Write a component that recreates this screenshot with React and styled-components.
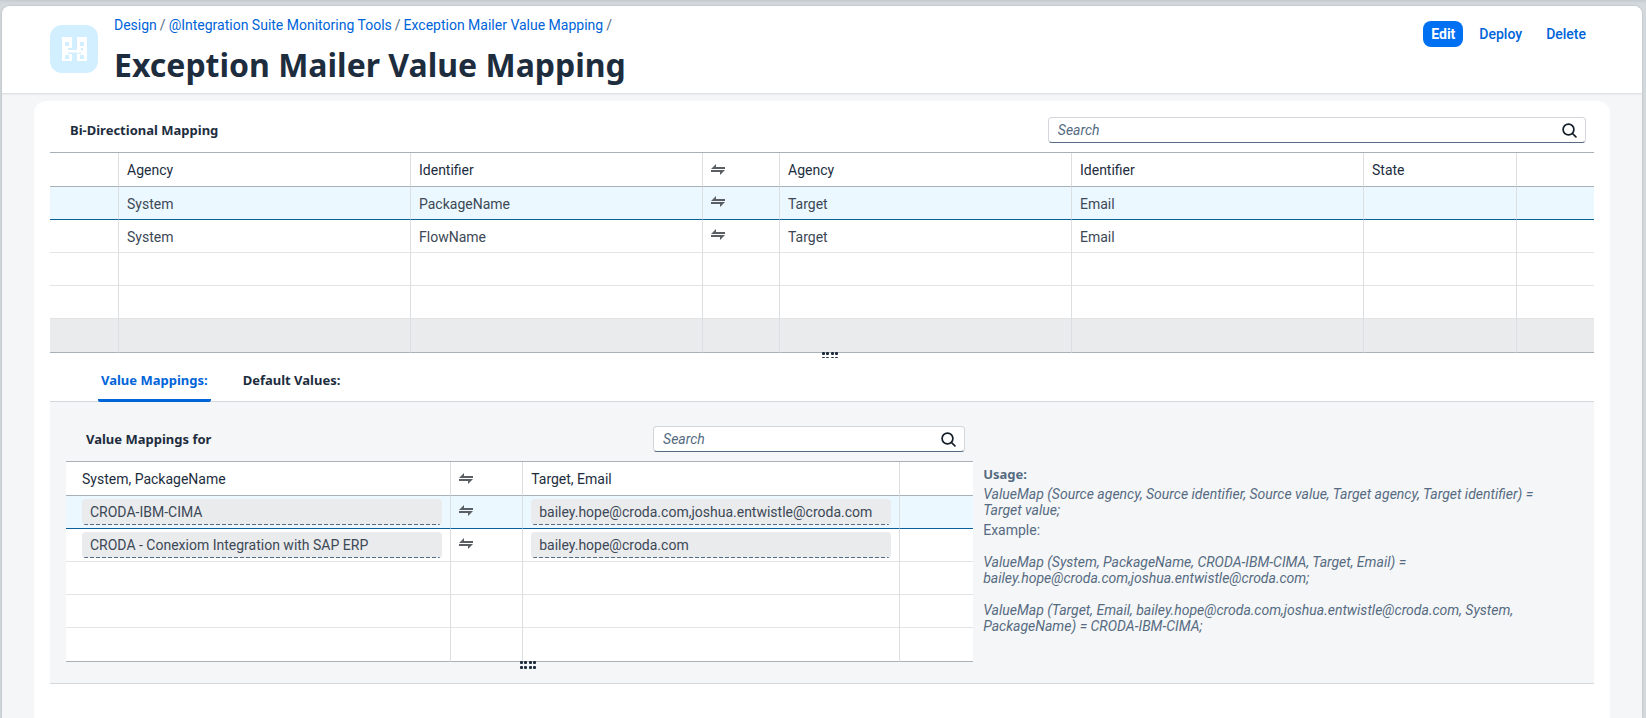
import React from "react";
import styled, { createGlobalStyle, css } from "styled-components";

const textFont = `Roboto, "Liberation Sans", sans-serif`;
const headingFont = `"Noto Sans", "Open Sans", sans-serif`;

const GlobalStyle = createGlobalStyle`
  * { box-sizing: border-box; }
  body {
    margin: 0;
    background: #d5dadd;
    color: #1d2d3e;
    font: 14px/20px ${textFont};
  }
  button, input { font: inherit; color: inherit; }
`;

const strongText = css`
  font-family: ${headingFont};
  font-size: 13px;
  font-weight: 700;
  line-height: 20px;
`;

const Shell = styled.div`
  display: flex;
  min-height: 100vh;
  padding: 6px 4px 0 2px;
  box-shadow: inset 0 3px 3px -1px #c6ccd1;
`;

const Page = styled.div`
  flex: 1;
  display: flex;
  flex-direction: column;
  min-width: 0;
  background: #f5f6f7;
  border-radius: 8px 8px 0 0;
  overflow: hidden;
  box-shadow: 0 0 2px #9aa5af;
`;

const Header = styled.header`
  display: flex;
  align-items: flex-start;
  height: 87px;
  padding: 8px 48px 0;
  background: #fff;
  box-shadow: 0 1px 2px #d5d8dc;
`;

const ObjectIcon = styled.div`
  display: flex;
  align-items: center;
  justify-content: center;
  width: 48px;
  height: 48px;
  margin: 11px 16px 0 0;
  border-radius: 12px;
  background: #d1efff;
`;

const Heading = styled.div`
  flex: 1;
  min-width: 0;
`;

const Breadcrumbs = styled.nav`
  display: flex;
  gap: 3px;
  margin-top: 1px;
  color: #556b82;
`;

const Crumb = styled.a`
  color: #0064d9;
  text-decoration: none;
`;

const Title = styled.h1`
  margin: 8px 0 0;
  font: 700 32px/44px ${headingFont};
`;

const Actions = styled.div`
  display: flex;
  gap: 8px;
  margin-top: 7px;
`;

const Action = styled.button`
  height: 26px;
  padding: 0 8px;
  border: 0;
  border-radius: 8px;
  font-weight: ${(p) => (p.$primary ? 700 : 500)};
  background: ${(p) => (p.$primary ? "#0070f2" : "transparent")};
  color: ${(p) => (p.$primary ? "#fff" : "#0064d9")};
`;

const Panel = styled.main`
  flex: 1;
  margin: 8px 32px 0;
  padding: 0 16px;
  background: #fff;
  border-radius: 12px 12px 0 0;
`;

const Toolbar = styled.div`
  display: flex;
  align-items: center;
  justify-content: space-between;
  padding: ${(p) => (p.$roomy ? 24 : 16)}px 8px 9px 20px;
`;

const ToolbarTitle = styled.h2`
  ${strongText}
  margin: 0;
`;

const SearchBox = styled.label`
  display: flex;
  align-items: center;
  width: 35.5%;
  height: 26px;
  padding: 0 8px;
  border: 1px solid #d3d7db;
  border-bottom-color: #556b82;
  border-radius: 4px;
  background: #fff;
`;

const SearchInput = styled.input`
  flex: 1;
  min-width: 0;
  padding: 0 1px;
  border: 0;
  outline: 0;
  background: transparent;
  &::placeholder {
    color: #556b82;
    font-style: italic;
    opacity: 1;
  }
`;

const Table = styled.table`
  width: 100%;
  table-layout: fixed;
  border-collapse: separate;
  border-spacing: 0;
  border-top: 1px solid #a8b0b8;
  background: #fff;
`;

const Col = styled.col`
  width: ${(p) => p.$width};
`;

const cellBase = css`
  padding: 0 8px;
  text-align: left;
  border-right: 1px solid #dcdfe2;
  &:first-child { padding-left: ${(p) => (p.$inset ? 16 : 8)}px; }
  &:last-child { border-right: 0; }
`;

const HeadCell = styled.th`
  ${cellBase}
  height: 34px;
  font-weight: 400;
  border-bottom: 1px solid #a8b0b8;
`;

const Cell = styled.td`
  ${cellBase}
  height: 33px;
  padding-bottom: ${(p) => (p.$raised ? 4 : 0)}px;
  border-bottom: 1px solid #e1e3e5;
  color: #3c4856;
`;

const Row = styled.tr`
  background: ${(p) => (p.$selected ? "#ebf8ff" : p.$muted ? "#eaebed" : "#fff")};
  ${Cell} { ${(p) => p.$selected && "border-bottom-color: #0a6199;"} }
  &:last-child ${Cell} {
    height: 34px;
    border-bottom-color: #a8b0b8;
  }
`;

const CellText = styled.span`
  display: block;
  padding-top: 2px;
`;

const Glyph = styled.svg`
  display: block;
  flex: none;
`;

const ValueField = styled.input`
  display: block;
  width: 100%;
  height: 26px;
  padding: 0 8px;
  border: 0;
  border-radius: 4px;
  background:
    repeating-linear-gradient(90deg, #556b82 0 4px, transparent 4px 6px)
    center bottom / calc(100% - 4px) 1px no-repeat #eaebed;
`;

const Splitter = styled.div`
  position: relative;
  height: 0;
`;

const Grip = styled.svg`
  position: absolute;
  top: -1px;
  left: 50%;
`;

const Tabs = styled.div`
  display: flex;
  gap: 29px;
  height: 49px;
  padding: 0 48px;
  border-bottom: 1px solid #d5d8dc;
  box-shadow: 0 2px 2px -1px #e4e7ea;
`;

const Tab = styled.button`
  ${strongText}
  height: 49px;
  padding: 8px 3px 0;
  border: 0;
  border-bottom: 3px solid ${(p) => (p.$active ? "#0064d9" : "transparent")};
  border-radius: 2px;
  background: transparent;
  color: ${(p) => (p.$active ? "#0064d9" : "#1d2d3e")};
`;

const Details = styled.section`
  display: grid;
  grid-template-columns: minmax(0, 6fr) minmax(0, 4fr);
  padding: 0 16px 21px;
  background: #f5f6f7;
  border-bottom: 1px solid #d5d8dc;
`;

const Usage = styled.aside`
  display: flex;
  flex-direction: column;
  gap: 4px;
  padding: 64px 16px 0 10px;
  color: #556b82;
  line-height: 16px;
`;

const UsageTitle = styled.h3`
  ${strongText}
  margin: 0;
  line-height: 16px;
`;

const UsageText = styled.p`
  margin: 0 0 ${(p) => (p.$spaced ? 12 : 0)}px;
  font-style: ${(p) => (p.$plain ? "normal" : "italic")};
`;

function MappingGlyph() {
  return (
    <Glyph width="25" height="24" viewBox="0 0 25 24" aria-hidden="true">
      <path
        fill="#fff"
        fillRule="evenodd"
        d="M0 0h10v11H6v2h9v-2h4v2.500h2V11h-6V0h10v24H15v-7h4v-1.500h-2V17l-3-1.500H6V17h4v7H0z M3 5v4h4V5z M18 5v4h4V5z M3 18v4h4v-4z M18 18v4h4v-4z"
      />
    </Glyph>
  );
}

function ArrowsGlyph() {
  return (
    <Glyph width="14" height="11" viewBox="0 0 14 11" role="img" aria-label="Bi-directional">
      <path fill="#5b5f63" d="M0 5 5 0v3h9v2zM0 6h14l-5 5V8H0z" />
    </Glyph>
  );
}

function GripHandle({ clipped }) {
  return (
    <Grip width="17" height={clipped ? 6 : 9} viewBox={`0 0 17 ${clipped ? 6 : 9}`} aria-hidden="true">
      {[0, 4, 9, 13].map((x) => (
        <g key={x} fill="#1d2d3e">
          <rect x={x} y="0" width="3" height="3" rx="1" />
          <rect x={x} y="5" width="3" height="3" rx="1" />
        </g>
      ))}
    </Grip>
  );
}

function Search({ name }) {
  return (
    <SearchBox>
      <SearchInput type="text" placeholder="Search" aria-label={name} />
      <Glyph width="15" height="15" viewBox="0 0 15 15" fill="none" stroke="#131e29" strokeWidth="1.7" strokeLinecap="round" aria-hidden="true">
        <circle cx="6.5" cy="6.5" r="5.4" />
        <path d="m10.5 10.5 3.4 3.4" />
      </Glyph>
    </SearchBox>
  );
}

const range = (n) => Array.from({ length: n }, (_, i) => i);

const mappings = [
  ["System", "PackageName", "Target", "Email"],
  ["System", "FlowName", "Target", "Email"],
  null,
  null,
  null,
];

const values = [
  ["CRODA-IBM-CIMA", "bailey.hope@croda.com,joshua.entwistle@croda.com"],
  ["CRODA - Conexiom Integration with SAP ERP", "bailey.hope@croda.com"],
  null,
  null,
  null,
];

function MappingTable() {
  return (
    <Table>
      <colgroup>
        {["69px", "auto", "auto", "77px", "auto", "auto", "153px", "77px"].map((w, i) => (
          <Col key={i} $width={w} />
        ))}
      </colgroup>
      <thead>
        <tr>
          <HeadCell />
          <HeadCell>Agency</HeadCell>
          <HeadCell>Identifier</HeadCell>
          <HeadCell><ArrowsGlyph /></HeadCell>
          <HeadCell>Agency</HeadCell>
          <HeadCell>Identifier</HeadCell>
          <HeadCell>State</HeadCell>
          <HeadCell />
        </tr>
      </thead>
      <tbody>
        {mappings.map((m, i) => (
          <Row key={i} $selected={i === 0} $muted={i === mappings.length - 1}>
            {m ? (
              <>
                <Cell />
                <Cell><CellText>{m[0]}</CellText></Cell>
                <Cell><CellText>{m[1]}</CellText></Cell>
                <Cell $raised><ArrowsGlyph /></Cell>
                <Cell><CellText>{m[2]}</CellText></Cell>
                <Cell><CellText>{m[3]}</CellText></Cell>
                <Cell />
                <Cell />
              </>
            ) : (
              range(8).map((c) => <Cell key={c} />)
            )}
          </Row>
        ))}
      </tbody>
    </Table>
  );
}

function ValueTable() {
  return (
    <Table>
      <colgroup>
        <Col $width="auto" />
        <Col $width="72px" />
        <Col $width="377px" />
        <Col $width="73px" />
      </colgroup>
      <thead>
        <tr>
          <HeadCell $inset>System, PackageName</HeadCell>
          <HeadCell><ArrowsGlyph /></HeadCell>
          <HeadCell>Target, Email</HeadCell>
          <HeadCell />
        </tr>
      </thead>
      <tbody>
        {values.map((v, i) => (
          <Row key={i} $selected={i === 0}>
            {v ? (
              <>
                <Cell $inset><ValueField readOnly value={v[0]} aria-label="Source value" /></Cell>
                <Cell $raised><ArrowsGlyph /></Cell>
                <Cell><ValueField readOnly value={v[1]} aria-label="Target value" /></Cell>
                <Cell />
              </>
            ) : (
              range(4).map((c) => <Cell key={c} />)
            )}
          </Row>
        ))}
      </tbody>
    </Table>
  );
}

export default function App() {
  return (
    <Shell>
      <GlobalStyle />
      <Page>
        <Header>
          <ObjectIcon><MappingGlyph /></ObjectIcon>
          <Heading>
            <Breadcrumbs aria-label="Breadcrumb">
              <Crumb href="#design">Design</Crumb>
              <span>/</span>
              <Crumb href="#package">@Integration Suite Monitoring Tools</Crumb>
              <span>/</span>
              <Crumb href="#mapping">Exception Mailer Value Mapping</Crumb>
              <span>/</span>
            </Breadcrumbs>
            <Title>Exception Mailer Value Mapping</Title>
          </Heading>
          <Actions>
            <Action type="button" $primary>Edit</Action>
            <Action type="button">Deploy</Action>
            <Action type="button">Delete</Action>
          </Actions>
        </Header>
        <Panel>
          <Toolbar>
            <ToolbarTitle>Bi-Directional Mapping</ToolbarTitle>
            <Search name="Search mappings" />
          </Toolbar>
          <MappingTable />
          <Splitter><GripHandle clipped /></Splitter>
          <Tabs role="tablist">
            <Tab type="button" role="tab" aria-selected="true" $active>Value Mappings:</Tab>
            <Tab type="button" role="tab" aria-selected="false">Default Values:</Tab>
          </Tabs>
          <Details>
            <div>
              <Toolbar $roomy>
                <ToolbarTitle>Value Mappings for</ToolbarTitle>
                <Search name="Search values" />
              </Toolbar>
              <ValueTable />
              <Splitter><GripHandle /></Splitter>
            </div>
            <Usage>
              <UsageTitle>Usage:</UsageTitle>
              <UsageText>
                ValueMap (Source agency, Source identifier, Source value, Target agency, Target identifier) = Target value;
              </UsageText>
              <UsageText $plain $spaced>Example:</UsageText>
              <UsageText $spaced>
                ValueMap (System, PackageName, CRODA-IBM-CIMA, Target, Email) = bailey.hope@croda.com,joshua.entwistle@croda.com;
              </UsageText>
              <UsageText>
                ValueMap (Target, Email, bailey.hope@croda.com,joshua.entwistle@croda.com, System, PackageName) = CRODA-IBM-CIMA;
              </UsageText>
            </Usage>
          </Details>
        </Panel>
      </Page>
    </Shell>
  );
}
